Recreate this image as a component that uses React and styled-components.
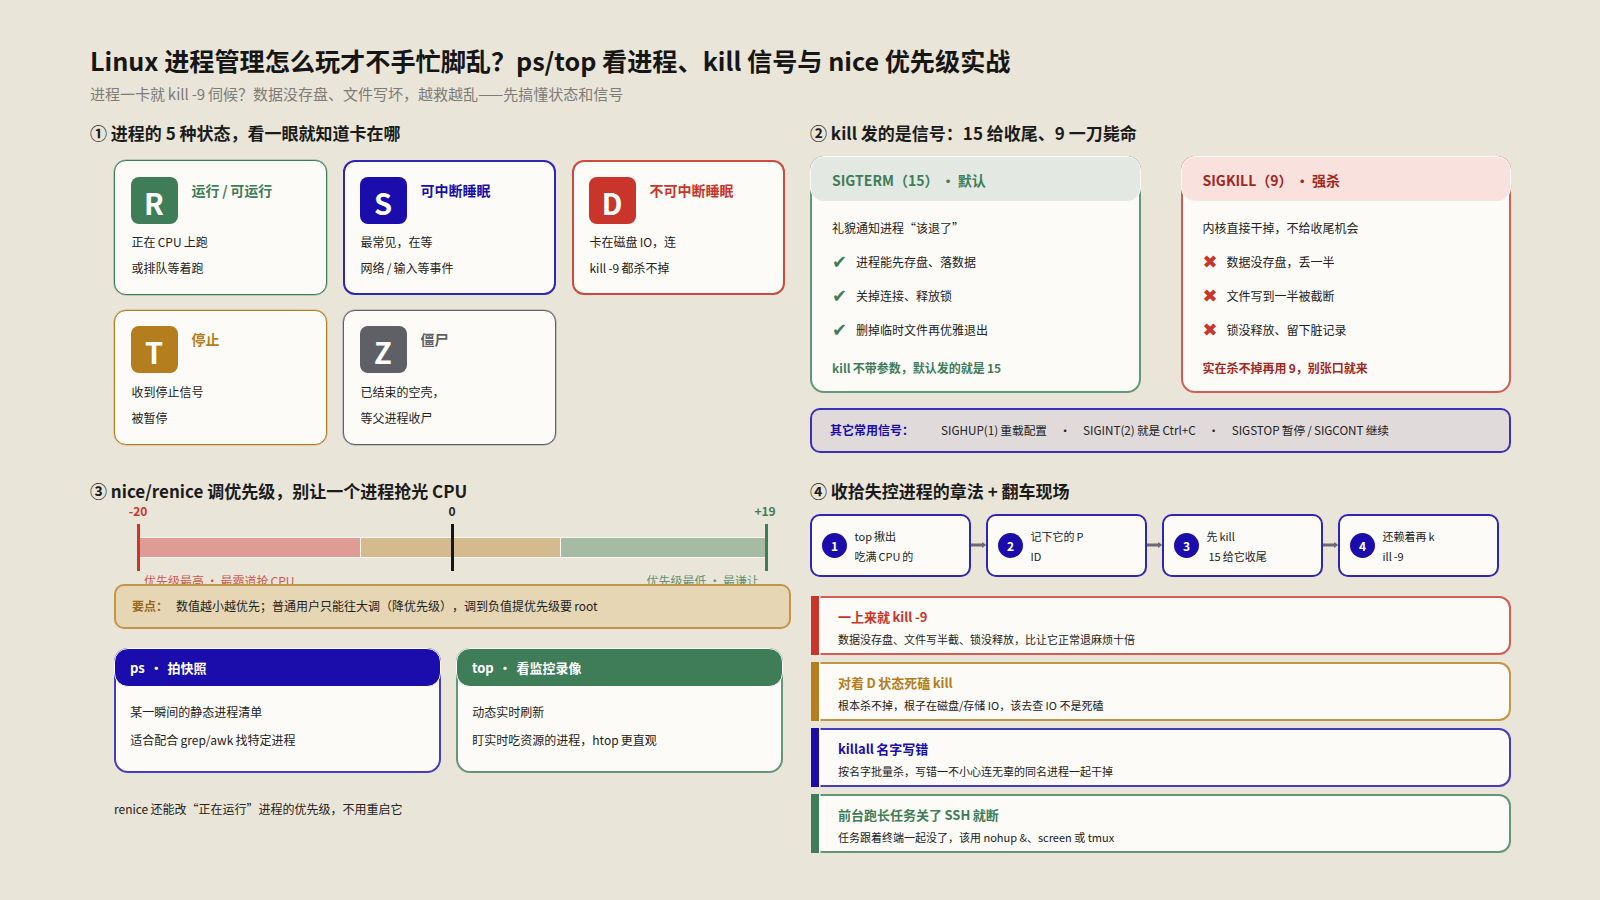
import React from 'react';
import styled, { createGlobalStyle } from 'styled-components';

const green = '#3f7d58';
const blue = '#1a0dab';
const red = '#c9352b';
const amber = '#b47d1e';
const slate = '#5f5f66';
const paper = '#fcfbf7';
const ink = '#222222';

// the borders read as about 1.5px in the picture, so a 2px line is softened a little
const edge = (color, amount = 80) => `color-mix(in srgb, ${color} ${amount}%, ${paper})`;

const states = [
  { letter: 'R', name: '运行 / 可运行', color: green, lines: ['正在 CPU 上跑', '或排队等着跑'] },
  { letter: 'S', name: '可中断睡眠', color: blue, thick: true, lines: ['最常见，在等', '网络 / 输入等事件'] },
  { letter: 'D', name: '不可中断睡眠', color: red, thick: true, lines: ['卡在磁盘 IO，连', 'kill -9 都杀不掉'] },
  { letter: 'T', name: '停止', color: amber, lines: ['收到停止信号', '被暂停'] },
  { letter: 'Z', name: '僵尸', color: slate, lines: ['已结束的空壳，', '等父进程收尸'] }
];

const steps = [
  ['top 揪出', '吃满 CPU 的'],
  ['记下它的 P', 'ID'],
  ['先 kill', ' 15 给它收尾'],
  ['还赖着再 k', 'ill -9']
];

const traps = [
  { title: '一上来就 kill -9', text: '数据没存盘、文件写半截、锁没释放，比让它正常退麻烦十倍', color: red },
  { title: '对着 D 状态死磕 kill', text: '根本杀不掉，根子在磁盘/存储 IO，该去查 IO 不是死磕', color: amber },
  { title: 'killall 名字写错', text: '按名字批量杀，写错一不小心连无辜的同名进程一起干掉', color: blue },
  { title: '前台跑长任务关了 SSH 就断', text: '任务跟着终端一起没了，该用 nohup &、screen 或 tmux', color: green }
];

const GlobalStyle = createGlobalStyle`
  html, body {
    margin: 0;
    padding: 0;
    background: #e9e5d8;
  }
  * {
    box-sizing: border-box;
  }
`;

const Page = styled.div`
  width: 1600px;
  height: 900px;
  overflow: hidden;
  padding: 43px 89px 0 90px;
  background: #e9e5d8;
  color: ${ink};
  font-family: 'Noto Sans CJK SC', 'Noto Sans', sans-serif;
  word-spacing: -0.5px;
  text-spacing-trim: space-all;
`;

const Title = styled.h1`
  margin: 0;
  font-size: 25.15px;
  line-height: 34px;
  font-weight: 700;
  word-spacing: 0;
  color: #161616;
`;

const Subtitle = styled.p`
  margin: 6px 0 15px;
  font-size: 15px;
  line-height: 22px;
  color: #7d7c78;
`;

const Columns = styled.div`
  display: grid;
  grid-template-columns: 701px 701px;
  grid-template-rows: 358px auto;
  column-gap: 19px;
`;

const Section = styled.section`
  min-width: 0;
`;

const Heading = styled.h2`
  margin: 0;
  font-size: 17px;
  line-height: 25px;
  font-weight: 700;
  word-spacing: 0;
  color: #1b1b1b;
`;

const StateGrid = styled.div`
  display: grid;
  grid-template-columns: repeat(3, 213px);
  grid-auto-rows: 134.7px;
  gap: 15.3px 16px;
  margin: 15px 0 0 24px;
`;

const StateCard = styled.div`
  padding: ${p => (p.$thick ? '14.5px 14.5px 0' : '15.5px 15.5px 0')};
  background: ${paper};
  border: ${p => (p.$thick ? `2px solid ${edge(p.$color, 90)}` : `1px solid ${p.$color}`)};
  box-shadow: ${p => (p.$thick ? 'none' : `0 0 0 0.5px ${edge(p.$color, 60)}`)};
  border-radius: 12px;
`;

const StateTop = styled.div`
  display: flex;
  gap: 14px;
`;

const StateIcon = styled.div`
  width: 47px;
  height: 47px;
  display: flex;
  align-items: center;
  justify-content: center;
  padding-top: 3px;
  border-radius: 8px;
  background: ${p => p.$color};
  color: #fff;
  font-size: 29px;
  font-weight: 700;
`;

const StateName = styled.div`
  margin-top: 3px;
  font-size: 14px;
  line-height: 20px;
  font-weight: 700;
  color: ${p => p.$color};
`;

const StateText = styled.div`
  margin-top: 5.5px;
  padding-left: 1px;
  font-size: 12px;
  line-height: 26px;
  color: ${ink};
`;

const SignalCards = styled.div`
  display: grid;
  grid-template-columns: 330.5px 330.5px;
  gap: 40px;
  margin-top: 11px;
`;

const SignalCard = styled.div`
  height: 237px;
  background: ${paper};
  border: 2px solid ${p => edge(p.$color)};
  border-radius: 14px;
`;

const SignalHeader = styled.div`
  height: 46px;
  margin: -2px -2px 0;
  padding: 1px 21px 0;
  display: flex;
  align-items: center;
  background: ${p => p.$bg};
  border: 1px solid ${paper};
  border-radius: 14px;
  color: ${p => p.$color};
  font-size: 14px;
  font-weight: 700;
  white-space: pre;
`;

const SignalBody = styled.div`
  padding: 8.5px 20px 0;
  font-size: 12px;
`;

const SignalLine = styled.div`
  height: 34px;
  display: flex;
  align-items: center;
  gap: 10px;
`;

const Mark = styled.span`
  width: 14px;
  font-family: 'DejaVu Sans', sans-serif;
  font-size: 18px;
  line-height: 1;
  text-align: center;
  color: ${p => p.$color};
`;

const SignalFoot = styled.div`
  margin-top: 11px;
  line-height: 20px;
  font-weight: 700;
  color: ${p => p.$color};
`;

const OtherSignals = styled.div`
  height: 44.7px;
  margin-top: 15.3px;
  padding: 0 0 2px 18px;
  display: flex;
  align-items: center;
  background: #e0dadb;
  border: 2px solid ${edge(blue, 85)};
  border-radius: 10px;
  font-size: 11.7px;
`;

const OtherLabel = styled.strong`
  margin-right: 27px;
  font-size: 12px;
  font-weight: 700;
  color: ${blue};
`;

const Dot = styled.span`
  width: 36px;
  text-align: center;
`;

const Scale = styled.div`
  position: relative;
  width: 628px;
  margin-left: 48px;
  padding-top: 33.7px;
`;

const TickLabel = styled.span`
  position: absolute;
  top: 0;
  left: ${p => p.$left}px;
  transform: translateX(-50%);
  font-size: 12px;
  line-height: 16px;
  font-weight: 700;
  color: ${p => p.$color};
`;

const Tick = styled.span`
  position: absolute;
  top: 21px;
  left: ${p => p.$left - 1.5}px;
  width: 3px;
  height: 46.7px;
  background: ${p => p.$color};
`;

const Bar = styled.div`
  height: 21.6px;
  display: flex;
`;

const BarPart = styled.div`
  width: ${p => p.$width}px;
  background: ${p => p.$color};
  border: 1px solid #f8f6f0;
  border-left-width: 0;
`;

const Captions = styled.div`
  display: flex;
  justify-content: space-between;
  margin-top: 14.7px;
  padding: 0 7px 0 6px;
  font-size: 12px;
  line-height: 16px;
`;

const Caption = styled.span`
  color: ${p => p.$color};
  opacity: 0.8;
`;

const Callout = styled.div`
  position: relative;
  height: 44.4px;
  margin: -4.7px 0 0 24px;
  width: 676.6px;
  padding: 0 0 1px 16px;
  display: flex;
  align-items: center;
  background: #e6d6b3;
  border: 2px solid ${edge(amber)};
  border-radius: 10px;
  font-size: 12px;
`;

const CalloutLabel = styled.strong`
  margin-right: 8px;
  color: #98661a;
`;

const ToolCards = styled.div`
  display: grid;
  grid-template-columns: 327px 327px;
  gap: 15px;
  margin: 19.6px 0 0 24.3px;
`;

const ToolCard = styled.div`
  height: 124.4px;
  background: ${paper};
  border: 2px solid ${p => edge(p.$color)};
  border-radius: 14px;
`;

const ToolHeader = styled.div`
  height: 39px;
  margin: -2px -2px 0;
  padding: 0 14.7px;
  display: flex;
  align-items: center;
  background: ${p => p.$color};
  border: 1px solid ${paper};
  border-radius: 14px;
  color: #fff;
  font-size: 13px;
  font-weight: 700;
  white-space: pre;
`;

const ToolBody = styled.div`
  padding: 11px 14px 0;
  font-size: 12px;
  line-height: 27.7px;
`;

const Note = styled.p`
  margin: 27px 0 0 24px;
  font-size: 12px;
  line-height: 18px;
`;

const StepRow = styled.div`
  display: flex;
  align-items: center;
  margin-top: 11px;
`;

const Step = styled.div`
  width: 160.5px;
  height: 62.7px;
  padding-left: 10px;
  display: flex;
  align-items: center;
  gap: 7.5px;
  background: ${paper};
  border: 2px solid ${edge(blue, 90)};
  border-radius: 10px;
`;

const StepNumber = styled.span`
  flex: none;
  width: 25px;
  height: 25px;
  display: flex;
  align-items: center;
  justify-content: center;
  border-radius: 50%;
  background: ${blue};
  color: #fff;
  font-size: 12px;
  font-weight: 700;
`;

const StepText = styled.div`
  padding-top: 2px;
  font-size: 11px;
  line-height: 20px;
  white-space: pre;
`;

const Arrow = styled.svg`
  flex: none;
  width: 15.5px;
  height: 8px;
`;

const TrapList = styled.div`
  display: grid;
  grid-auto-rows: 58.7px;
  gap: 7.3px;
  margin-top: 19.3px;
`;

const Trap = styled.div`
  position: relative;
  margin-left: 1px;
  padding: 8px 0 0 25px;
  background: ${paper};
  border: 2px solid ${p => edge(p.$color)};
  border-radius: 0 12px 12px 0;

  &::before {
    content: '';
    position: absolute;
    top: -2px;
    bottom: -2px;
    left: -2px;
    width: 7.5px;
    background: ${p => p.$color};
    box-shadow: 1.5px 0 0 ${paper};
  }
`;

const TrapTitle = styled.div`
  font-size: 13px;
  line-height: 22px;
  font-weight: 700;
  color: ${p => p.$color};
`;

const TrapText = styled.div`
  margin-top: 1px;
  font-size: 11px;
  line-height: 20px;
  word-spacing: 0;
`;

export default function App() {
  return (
    <Page>
      <GlobalStyle />
      <Title>Linux 进程管理怎么玩才不手忙脚乱？ps/top 看进程、kill 信号与 nice 优先级实战</Title>
      <Subtitle>进程一卡就 kill -9 伺候？数据没存盘、文件写坏，越救越乱——先搞懂状态和信号</Subtitle>
      <Columns>
        <Section>
          <Heading>① 进程的 5 种状态，看一眼就知道卡在哪</Heading>
          <StateGrid>
            {states.map(s => (
              <StateCard key={s.letter} $color={s.color} $thick={s.thick}>
                <StateTop>
                  <StateIcon $color={s.color}>{s.letter}</StateIcon>
                  <StateName $color={s.color}>{s.name}</StateName>
                </StateTop>
                <StateText>
                  {s.lines.map(l => (
                    <div key={l}>{l}</div>
                  ))}
                </StateText>
              </StateCard>
            ))}
          </StateGrid>
        </Section>

        <Section>
          <Heading>② kill 发的是信号：15 给收尾、9 一刀毙命</Heading>
          <SignalCards>
            <SignalCard $color={green}>
              <SignalHeader $bg="#e3e9e2" $color={green}>SIGTERM（15） · 默认</SignalHeader>
              <SignalBody>
                <SignalLine>礼貌通知进程“该退了”</SignalLine>
                <SignalLine><Mark $color={green}>✔</Mark>进程能先存盘、落数据</SignalLine>
                <SignalLine><Mark $color={green}>✔</Mark>关掉连接、释放锁</SignalLine>
                <SignalLine><Mark $color={green}>✔</Mark>删掉临时文件再优雅退出</SignalLine>
                <SignalFoot $color={green}>kill 不带参数，默认发的就是 15</SignalFoot>
              </SignalBody>
            </SignalCard>
            <SignalCard $color={red}>
              <SignalHeader $bg="#f9e2de" $color="#a3261f">SIGKILL（9） · 强杀</SignalHeader>
              <SignalBody>
                <SignalLine>内核直接干掉，不给收尾机会</SignalLine>
                <SignalLine><Mark $color={red}>✖</Mark>数据没存盘，丢一半</SignalLine>
                <SignalLine><Mark $color={red}>✖</Mark>文件写到一半被截断</SignalLine>
                <SignalLine><Mark $color={red}>✖</Mark>锁没释放、留下脏记录</SignalLine>
                <SignalFoot $color="#a3261f">实在杀不掉再用 9，别张口就来</SignalFoot>
              </SignalBody>
            </SignalCard>
          </SignalCards>
          <OtherSignals>
            <OtherLabel>其它常用信号：</OtherLabel>
            <span>SIGHUP(1) 重载配置</span>
            <Dot>·</Dot>
            <span>SIGINT(2) 就是 Ctrl+C</span>
            <Dot>·</Dot>
            <span>SIGSTOP 暂停 / SIGCONT 继续</span>
          </OtherSignals>
        </Section>

        <Section>
          <Heading>③ nice/renice 调优先级，别让一个进程抢光 CPU</Heading>
          <Scale>
            <TickLabel $left={0} $color={red}>-20</TickLabel>
            <TickLabel $left={314} $color={ink}>0</TickLabel>
            <TickLabel $left={627} $color={green}>+19</TickLabel>
            <Bar>
              <BarPart $width={223.4} $color="#de9c94" />
              <BarPart $width={199.2} $color="#d4bb8f" />
              <BarPart $width={205.4} $color="#a5bba3" />
            </Bar>
            <Tick $left={0} $color={red} />
            <Tick $left={314} $color="#161616" />
            <Tick $left={628} $color={green} />
            <Captions>
              <Caption $color={red}>优先级最高 · 最霸道抢 CPU</Caption>
              <Caption $color={green}>优先级最低 · 最谦让</Caption>
            </Captions>
          </Scale>
          <Callout>
            <CalloutLabel>要点：</CalloutLabel>
            数值越小越优先；普通用户只能往大调（降优先级），调到负值提优先级要 root
          </Callout>
          <ToolCards>
            <ToolCard $color={blue}>
              <ToolHeader $color={blue}>ps  ·  拍快照</ToolHeader>
              <ToolBody>
                <div>某一瞬间的静态进程清单</div>
                <div>适合配合 grep/awk 找特定进程</div>
              </ToolBody>
            </ToolCard>
            <ToolCard $color={green}>
              <ToolHeader $color={green}>top  ·  看监控录像</ToolHeader>
              <ToolBody>
                <div>动态实时刷新</div>
                <div>盯实时吃资源的进程，htop 更直观</div>
              </ToolBody>
            </ToolCard>
          </ToolCards>
          <Note>renice 还能改“正在运行”进程的优先级，不用重启它</Note>
        </Section>

        <Section>
          <Heading>④ 收拾失控进程的章法 + 翻车现场</Heading>
          <StepRow>
            {steps.map((lines, i) => (
              <React.Fragment key={lines[0]}>
                {i > 0 && (
                  <Arrow viewBox="0 0 15.5 8">
                    <rect x="0" y="2.5" width="11" height="3" fill="#6b6a70" />
                    <polygon points="11,1 15.5,4 11,7" fill="#6b6a70" />
                  </Arrow>
                )}
                <Step>
                  <StepNumber>{i + 1}</StepNumber>
                  <StepText>
                    {lines.map(l => (
                      <div key={l}>{l}</div>
                    ))}
                  </StepText>
                </Step>
              </React.Fragment>
            ))}
          </StepRow>
          <TrapList>
            {traps.map(t => (
              <Trap key={t.title} $color={t.color}>
                <TrapTitle $color={t.color}>{t.title}</TrapTitle>
                <TrapText>{t.text}</TrapText>
              </Trap>
            ))}
          </TrapList>
        </Section>
      </Columns>
    </Page>
  );
}
